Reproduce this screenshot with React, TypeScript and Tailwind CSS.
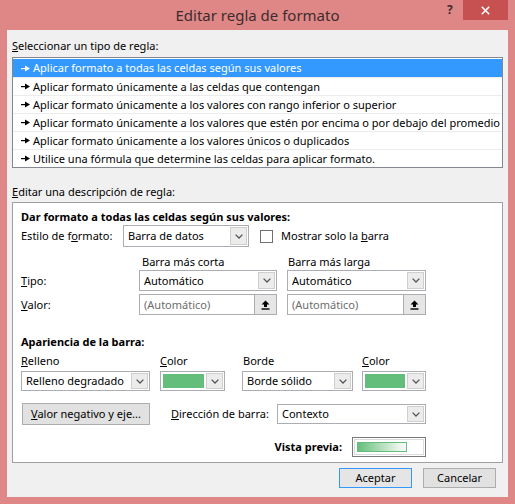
import React from 'react';

const rules = [
  'Aplicar formato a todas las celdas según sus valores',
  'Aplicar formato únicamente a las celdas que contengan',
  'Aplicar formato únicamente a los valores con rango inferior o superior',
  'Aplicar formato únicamente a los valores que estén por encima o por debajo del promedio',
  'Aplicar formato únicamente a los valores únicos o duplicados',
  'Utilice una fórmula que determine las celdas para aplicar formato.',
];

const RuleArrow: React.FC<{ color: string }> = ({ color }) => (
  <svg width="9" height="7" viewBox="0 0 9 7" className="shrink-0">
    <rect x="0" y="3" width="5" height="1.2" fill={color} />
    <path d="M4 0.5 L9 3.5 L4 6.5 Z" fill={color} />
  </svg>
);

const Chevron: React.FC = () => (
  <svg width="8" height="5" viewBox="0 0 8 5">
    <path d="M0.6 0.6 L4 4 L7.4 0.6" fill="none" stroke="#555" strokeWidth="1.3" />
  </svg>
);

const ChevronBox: React.FC = () => (
  <div className="mr-[1px] w-[17px] self-stretch my-[1px] bg-[#ececec] border border-[#cfcfcf] flex items-center justify-center shrink-0">
    <Chevron />
  </div>
);

const Select: React.FC<{ text: string; className: string }> = ({ text, className }) => (
  <div className={`flex items-center bg-white border border-[#abadb3] ${className}`}>
    <span className="flex-1 pl-[4px] whitespace-nowrap overflow-hidden">{text}</span>
    <ChevronBox />
  </div>
);

const ColorSelect: React.FC<{ className: string }> = ({ className }) => (
  <div className={`flex items-stretch bg-white border border-[#abadb3] ${className}`}>
    <div className="flex-1 m-[2px] bg-[#63be7b]" />
    <ChevronBox />
  </div>
);

const RefInput: React.FC = () => (
  <div className="flex items-stretch h-[21px] bg-white border border-[#abadb3]">
    <span className="flex-1 pl-[4px] flex items-center text-[#6d6d6d] whitespace-nowrap">(Automático)</span>
    <div className="w-[22px] bg-[#e6e6e6] border-l border-[#adadad] flex items-center justify-center">
      <svg width="9" height="10" viewBox="0 0 9 10">
        <path d="M4.5 0.5 L8.5 4.5 L6 4.5 L6 7 L3 7 L3 4.5 L0.5 4.5 Z" fill="#000" />
        <rect x="0.5" y="8.3" width="8" height="1.4" fill="#000" />
      </svg>
    </div>
  </div>
);

const App: React.FC = () => {
  return (
    <div className="w-[515px] h-[504px] bg-[#df8787] flex flex-col font-['Noto_Sans',sans-serif] text-[11px] leading-[16px] text-black">
      {/* Title bar */}
      <div className="relative h-[30px] shrink-0 flex items-center justify-center">
        <span className="text-[15px] leading-[20px] text-[#3d2c2c]">Editar regla de formato</span>
        <span className="absolute left-[447px] top-[2px] text-[12px] font-bold text-[#3d2c2c]">?</span>
        <div className="absolute left-[463px] top-0 w-[45px] h-[20px] bg-[#c75050] flex items-center justify-center">
          <svg width="9" height="9" viewBox="0 0 9 9">
            <path d="M0.8 0.8 L8.2 8.2 M8.2 0.8 L0.8 8.2" stroke="#fff" strokeWidth="1.6" />
          </svg>
        </div>
      </div>

      {/* Body */}
      <div className="mx-[7px] h-[467px] bg-[#f0f0f0] px-[5px] pt-[8px] flex flex-col">
        <div className="h-[16px]">
          <u>S</u>eleccionar un tipo de regla:
        </div>
        <div className="mt-[3px] h-[111px] border border-[#828790] bg-white pt-[1px]">
          {rules.map((r, i) => (
            <div
              key={r}
              className={`h-[18px] flex items-center gap-[3px] pl-[8px] whitespace-nowrap ${
                i === 0 ? 'bg-[#3399ff] text-white' : 'border-t border-[#ececec]'
              }`}
            >
              <RuleArrow color={i === 0 ? '#fff' : '#000'} />
              <span>{r}</span>
            </div>
          ))}
        </div>

        <div className="mt-[16px] h-[16px]">
          <u>E</u>ditar una descripción de regla:
        </div>

        <div className="mt-[2px] h-[261px] border border-[#a0a0a0] bg-white pl-[8px] pt-[6px] flex flex-col">
          <div className="h-[16px] font-bold">Dar formato a todas las celdas según sus valores:</div>

          <div className="flex items-center h-[22px]">
            <span className="w-[102px]">
              Estilo de f<u>o</u>rmato:
            </span>
            <Select text="Barra de datos" className="w-[126px] h-[22px]" />
            <div className="ml-[11px] w-[13px] h-[13px] border border-[#707070] bg-white" />
            <span className="ml-[8px]">
              Mostrar solo la <u>b</u>arra
            </span>
          </div>

          <div className="mt-[7px] grid grid-cols-[108px_138px_139px] gap-x-[10px]">
            <div />
            <div className="h-[16px] pl-[3px]">Barra más corta</div>
            <div className="h-[16px] pl-[1px]">Barra más larga</div>

            <div className="h-[21px] flex items-center">
              <u>T</u>ipo:
            </div>
            <Select text="Automático" className="h-[21px]" />
            <Select text="Automático" className="h-[21px]" />

            <div className="mt-[3px] h-[21px] flex items-center">
              <u>V</u>alor:
            </div>
            <div className="mt-[3px]">
              <RefInput />
            </div>
            <div className="mt-[3px]">
              <RefInput />
            </div>
          </div>

          <div className="mt-[19px] h-[16px] font-bold">Apariencia de la barra:</div>

          <div className="mt-[3px] flex h-[16px]">
            <span className="w-[139px]">
              <u>R</u>elleno
            </span>
            <span className="w-[83px]">
              <u>C</u>olor
            </span>
            <span className="w-[119px]">Borde</span>
            <span>
              <u>C</u>olor
            </span>
          </div>

          <div className="mt-[2px] flex items-center h-[20px]">
            <Select text="Relleno degradado" className="w-[129px] h-[20px]" />
            <ColorSelect className="ml-[10px] w-[65px] h-[20px]" />
            <Select text="Borde sólido" className="ml-[17px] w-[111px] h-[20px]" />
            <ColorSelect className="ml-[9px] w-[64px] h-[20px]" />
          </div>

          <div className="mt-[12px] flex items-center h-[22px]">
            <button className="ml-[1px] w-[128px] h-[22px] bg-[#e1e1e1] border border-[#adadad] text-[11px]">
              <u>V</u>alor negativo y eje...
            </button>
            <span className="ml-[21px] w-[106px]">
              <u>D</u>irección de barra:
            </span>
            <Select text="Contexto" className="w-[149px] h-[20px]" />
          </div>

          <div className="mt-[12px] w-[405px] flex items-center justify-end h-[20px]">
            <span className="font-bold mr-[10px]">Vista previa:</span>
            <div className="w-[74px] h-[20px] border border-[#7a7a7a] p-[1px]">
              <div className="w-full h-full border border-[#dcdcdc] pl-[2px] pt-[2px]">
                <div className="w-[50px] h-[10px] border border-[#63be7b] bg-gradient-to-r from-[#63be7b] to-white" />
              </div>
            </div>
          </div>
        </div>

        <div className="mt-[5px] flex justify-end pr-[7px] gap-[11px]">
          <button className="w-[73px] h-[20px] bg-[#e5e5e5] border border-[#3399ff] text-[11px]">Aceptar</button>
          <button className="w-[73px] h-[20px] bg-[#e1e1e1] border border-[#adadad] text-[11px]">Cancelar</button>
        </div>
      </div>
    </div>
  );
};

export default App;
